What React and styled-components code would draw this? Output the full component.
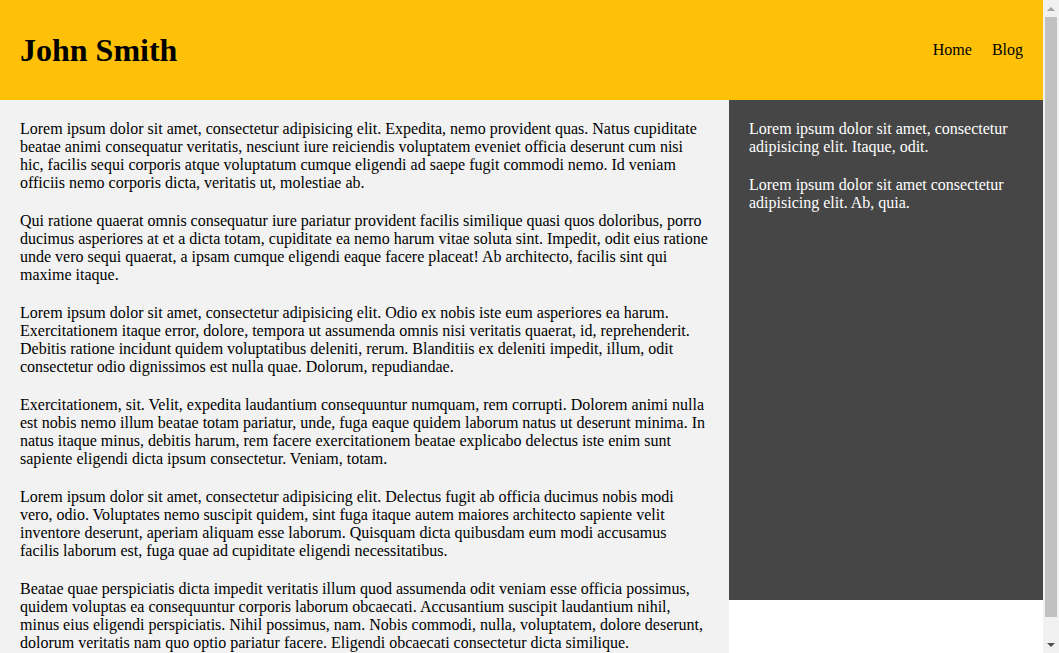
import React from "react";
import styled, { createGlobalStyle } from "styled-components";

const GlobalStyle = createGlobalStyle`
  html, body {
    margin: 0;
    padding: 0;
    background-color: #fff;
    font-family: "Liberation Serif", "Times New Roman", serif;
    font-size: 16px;
  }
`;

const articles = [
  "Lorem ipsum dolor sit amet, consectetur adipisicing elit. Expedita, nemo provident quas. Natus cupiditate beatae animi consequatur veritatis, nesciunt iure reiciendis voluptatem eveniet officia deserunt cum nisi hic, facilis sequi corporis atque voluptatum cumque eligendi ad saepe fugit commodi nemo. Id veniam officiis nemo corporis dicta, veritatis ut, molestiae ab.",
  "Qui ratione quaerat omnis consequatur iure pariatur provident facilis similique quasi quos doloribus, porro ducimus asperiores at et a dicta totam, cupiditate ea nemo harum vitae soluta sint. Impedit, odit eius ratione unde vero sequi quaerat, a ipsam cumque eligendi eaque facere placeat! Ab architecto, facilis sint qui maxime itaque.",
  "Lorem ipsum dolor sit amet, consectetur adipisicing elit. Odio ex nobis iste eum asperiores ea harum. Exercitationem itaque error, dolore, tempora ut assumenda omnis nisi veritatis quaerat, id, reprehenderit. Debitis ratione incidunt quidem voluptatibus deleniti, rerum. Blanditiis ex deleniti impedit, illum, odit consectetur odio dignissimos est nulla quae. Dolorum, repudiandae.",
  "Exercitationem, sit. Velit, expedita laudantium consequuntur numquam, rem corrupti. Dolorem animi nulla est nobis nemo illum beatae totam pariatur, unde, fuga eaque quidem laborum natus ut deserunt minima. In natus itaque minus, debitis harum, rem facere exercitationem beatae explicabo delectus iste enim sunt sapiente eligendi dicta ipsum consectetur. Veniam, totam.",
  "Lorem ipsum dolor sit amet, consectetur adipisicing elit. Delectus fugit ab officia ducimus nobis modi vero, odio. Voluptates nemo suscipit quidem, sint fuga itaque autem maiores architecto sapiente velit inventore deserunt, aperiam aliquam esse laborum. Quisquam dicta quibusdam eum modi accusamus facilis laborum est, fuga quae ad cupiditate eligendi necessitatibus.",
  "Beatae quae perspiciatis dicta impedit veritatis illum quod assumenda odit veniam esse officia possimus, quidem voluptas ea consequuntur corporis laborum obcaecati. Accusantium suscipit laudantium nihil, minus eius eligendi perspiciatis. Nihil possimus, nam. Nobis commodi, nulla, voluptatem, dolore deserunt, dolorum veritatis nam quo optio pariatur facere. Eligendi obcaecati consectetur dicta similique.",
];

const asides = [
  "Lorem ipsum dolor sit amet, consectetur adipisicing elit. Itaque, odit.",
  "Lorem ipsum dolor sit amet consectetur adipisicing elit. Ab, quia.",
];

const App = () => {
  return (
    <>
      <GlobalStyle />
      <Page>
        <Header>
          <Logo>John Smith</Logo>
          <Nav>
            <NavLink href="#">Home</NavLink>
            <NavLink href="#">Blog</NavLink>
          </Nav>
        </Header>
        <Main>
          <Content>
            {articles.map((text, i) => (
              <Paragraph key={i}>{text}</Paragraph>
            ))}
          </Content>
          <Sidebar>
            {asides.map((text, i) => (
              <Paragraph key={i}>{text}</Paragraph>
            ))}
          </Sidebar>
        </Main>
      </Page>
      {/* the browser's scrollbar, drawn since headless hides the real one */}
      <Scrollbar>
        <ScrollButton>
          <Arrow up />
        </ScrollButton>
        <Thumb />
        <Track />
        <ScrollButton>
          <Arrow />
        </ScrollButton>
      </Scrollbar>
    </>
  );
};

const Page = styled.div`
  margin-right: 16px;
`;

const Header = styled.header`
  height: 100px;
  display: flex;
  align-items: center;
  justify-content: space-between;
  padding: 0 20px;
  background-color: #ffc107;
`;

const Logo = styled.h1`
  margin: 0;
  font-size: 32px;
  font-weight: bold;
  color: #000;
`;

const Nav = styled.nav`
  display: flex;
  gap: 20px;
`;

const NavLink = styled.a`
  color: #000;
  text-decoration: none;
  font-size: 16px;
`;

const Main = styled.main`
  display: flex;
  align-items: flex-start;
`;

const Content = styled.section`
  flex: 1;
  box-sizing: border-box;
  padding: 20px;
  background-color: #f2f2f2;
  color: #000;
`;

const Sidebar = styled.aside`
  width: 314px;
  height: 500px;
  box-sizing: border-box;
  padding: 20px;
  background-color: #464646;
  color: #fff;
`;

const Paragraph = styled.p`
  margin: 0;
  line-height: 18px;

  & + & {
    margin-top: 20px;
  }
`;

const Scrollbar = styled.div`
  position: fixed;
  top: 0;
  right: 0;
  width: 16px;
  height: 100vh;
  display: flex;
  flex-direction: column;
  background-color: #f1f1f1;
`;

const ScrollButton = styled.div`
  height: 17px;
  display: flex;
  align-items: center;
  justify-content: center;
`;

const Arrow = styled.span`
  width: 0;
  height: 0;
  border-left: 4px solid transparent;
  border-right: 4px solid transparent;
  ${({ up }) =>
    up
      ? "border-bottom: 4px solid #a3a3a3;"
      : "border-top: 4px solid #505050;"}
`;

const Thumb = styled.div`
  height: 600px;
  margin: 0 2px;
  background-color: #c1c1c1;
`;

const Track = styled.div`
  flex: 1;
`;

export default App;
